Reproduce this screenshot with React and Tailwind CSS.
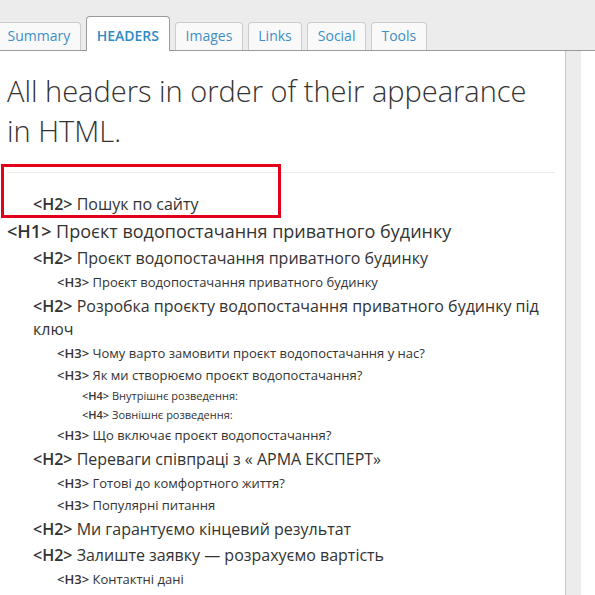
import React from "react";

const tabs = ["Summary", "HEADERS", "Images", "Links", "Social", "Tools"];

const items = [
  ["H2", "Пошук по сайту"],
  ["H1", "Проєкт водопостачання приватного будинку"],
  ["H2", "Проєкт водопостачання приватного будинку"],
  ["H3", "Проєкт водопостачання приватного будинку"],
  ["H2", "Розробка проєкту водопостачання приватного будинку під ключ"],
  ["H3", "Чому варто замовити проєкт водопостачання у нас?"],
  ["H3", "Як ми створюємо проєкт водопостачання?"],
  ["H4", "Внутрішнє розведення:"],
  ["H4", "Зовнішнє розведення:"],
  ["H3", "Що включає проєкт водопостачання?"],
  ["H2", "Переваги співпраці з « АРМА ЕКСПЕРТ»"],
  ["H3", "Готові до комфортного життя?"],
  ["H3", "Популярні питання"],
  ["H2", "Ми гарантуємо кінцевий результат"],
  ["H2", "Залиште заявку — розрахуємо вартість"],
  ["H3", "Контактні дані"],
];

const levelClass = {
  H1: "pl-0 text-[18px] leading-[28px]",
  H2: "pl-[26px] text-[16px] leading-[23px] py-[1.5px]",
  H3: "pl-[50px] text-[13px] leading-[22px]",
  H4: "pl-[75px] text-[11px] leading-[19px]",
};

export default function App() {
  return (
    <div className="relative w-[595px] h-[595px] overflow-hidden bg-[#ececec] font-['Open_Sans',sans-serif] text-[#333]">
      <div className="h-[51px] flex items-end gap-[5px] border-b border-[#9a9a9a] ml-[-3px]">
        {tabs.map((t) => {
          const active = t === "HEADERS";
          return active ? (
            <div
              key={t}
              className="h-[35px] mb-[-1px] px-[10px] pt-[9px] bg-white border border-b-0 border-[#9a9a9a] rounded-t-[4px] text-[14px] leading-[20px] font-semibold text-[#2f8ac4]"
            >
              {t}
            </div>
          ) : (
            <div
              key={t}
              className="h-[28px] px-[9.5px] pt-[3px] bg-[#f9f9f9] border border-b-0 border-[#cccccc] rounded-t-[4px] text-[14px] leading-[20px] text-[#3d8fc6]"
            >
              {t}
            </div>
          );
        })}
      </div>
      <div className="flex h-[544px]">
        <div className="w-[566px] bg-white border-r border-[#c8c8c8] pl-[7px] pt-[20px]">
          <h1 className="text-[29px] leading-[40px] font-light text-[#333] pr-[20px]">
            All headers in order of their appearance in HTML.
          </h1>
          <div className="mt-[21px] mr-[10px] border-t border-[#ececec]" />
          <div className="mt-[18px] mr-[10px]">
            {items.map(([tag, text], i) => (
              <div key={i} className={levelClass[tag]}>
                <span className="font-semibold">&lt;{tag}&gt;</span> {text}
              </div>
            ))}
          </div>
        </div>
        <div className="w-[15px] bg-[#ececec]" />
        <div className="flex-1 bg-white" />
      </div>
      <div className="absolute left-[1px] top-[164px] w-[280px] h-[54px] border-[3px] border-[#e3001b]" />
    </div>
  );
}
